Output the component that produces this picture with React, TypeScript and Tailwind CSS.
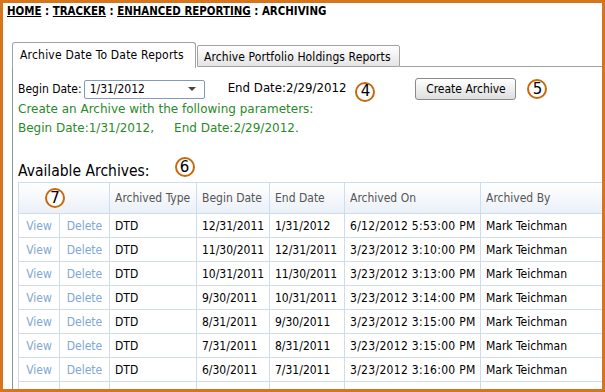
import React from "react";

const rows = [
  ["12/31/2011", "1/31/2012", "6/12/2012 5:53:00 PM"],
  ["11/30/2011", "12/31/2011", "3/23/2012 3:10:00 PM"],
  ["10/31/2011", "11/30/2011", "3/23/2012 3:13:00 PM"],
  ["9/30/2011", "10/31/2011", "3/23/2012 3:14:00 PM"],
  ["8/31/2011", "9/30/2011", "3/23/2012 3:15:00 PM"],
  ["7/31/2011", "8/31/2011", "3/23/2012 3:15:00 PM"],
  ["6/30/2011", "7/31/2011", "3/23/2012 3:16:00 PM"],
];

function Marker({ n }: { n: number }) {
  return (
    <span className="inline-flex w-[20px] h-[20px] items-center justify-center rounded-full border-2 border-[#c8690f] bg-white text-[15px] leading-none text-black font-['DejaVu_Sans',sans-serif]">
      {n}
    </span>
  );
}

const cell = "border border-[#cfdcee] pl-[5px]";

export default function App() {
  return (
    <div className="w-[605px] h-[392px] overflow-hidden border-[3px] border-[#d5761f] bg-white text-[12px] text-black font-['DejaVu_Sans_Condensed','Liberation_Sans',sans-serif]">
      {/* breadcrumb */}
      <div className="pl-[4px] pt-[1px] h-[14px] leading-[14px] text-[11.4px] font-bold">
        <span className="underline">HOME</span> : <span className="underline">TRACKER</span> :{" "}
        <span className="underline">ENHANCED REPORTING</span> : ARCHIVING
      </div>

      <div className="ml-[9px] mt-[25px]">
        {/* tabs */}
        <div className="flex items-end h-[25px]">
          <div className="relative z-10 -mb-px h-[26px] w-[184px] rounded-t-[3px] border border-b-0 border-[#a3a3a3] bg-white pl-[7px] pt-[5px] leading-[14px] tracking-[0.2px]">
            Archive Date To Date Reports
          </div>
          <div className="ml-[1px] h-[22px] w-[203px] rounded-t-[2px] border border-[#a3a3a3] bg-linear-to-b from-white to-[#e4e4e4] pl-[6px] pt-[4px] leading-[14px] tracking-[0.1px]">
            Archive Portfolio Holdings Reports
          </div>
          <div className="flex-1 border-b border-[#a3a3a3]" />
        </div>

        {/* panel */}
        <div className="h-[400px] border-l border-[#8f959b] pl-[5px] pt-[12px]">
          <div className="flex items-center h-[20px]">
            <span>Begin Date:</span>
            <div className="ml-[2px] flex h-[19px] w-[121px] items-center justify-between rounded-[2px] border border-[#7f9db9] bg-white pl-[5px] pr-[8px]">
              <span>1/31/2012</span>
              <span className="h-0 w-0 border-x-[4px] border-t-[4px] border-x-transparent border-t-[#444]" />
            </div>
            <span className="ml-[23px] font-['DejaVu_Sans',sans-serif] text-[11.8px]">End Date:2/29/2012</span>
            <span className="ml-[9px] mt-[5px]">
              <Marker n={4} />
            </span>
            <button className="ml-[40px] h-[22px] w-[101px] rounded-[3px] border border-[#8a8a8a] bg-linear-to-b from-white to-[#dedede]">
              Create Archive
            </button>
            <span className="ml-[11px]">
              <Marker n={5} />
            </span>
          </div>
          <div className="mt-[1px] leading-[19px] text-[#2a8a2a] font-['DejaVu_Sans',sans-serif] text-[12px]">
            <div>Create an Archive with the following parameters:</div>
            <div>
              Begin Date:1/31/2012,<span className="ml-[20px]">End Date:2/29/2012.</span>
            </div>
          </div>

          <div className="mt-[18px] mb-[2px] flex items-end h-[24px]">
            <span className="text-[15.5px] leading-[18px]">Available Archives:</span>
            <span className="ml-[25px] mb-[3px]">
              <Marker n={6} />
            </span>
          </div>

          <table className="table-fixed border-collapse w-[640px]">
            <colgroup>
              <col className="w-[41px]" />
              <col className="w-[50px]" />
              <col className="w-[87px]" />
              <col className="w-[73px]" />
              <col className="w-[75px]" />
              <col className="w-[136px]" />
              <col />
            </colgroup>
            <thead>
              <tr className="h-[31px] bg-linear-to-b from-white to-[#eaf0f8] text-[#555]">
                <th colSpan={2} className="border border-[#cfdcee] pl-[26px] text-left font-normal">
                  <Marker n={7} />
                </th>
                <th className={cell + " text-left font-normal"}>Archived Type</th>
                <th className={cell + " text-left font-normal"}>Begin Date</th>
                <th className={cell + " text-left font-normal"}>End Date</th>
                <th className={cell + " text-left font-normal"}>Archived On</th>
                <th className={cell + " text-left font-normal"}>Archived By</th>
              </tr>
            </thead>
            <tbody>
              {rows.map((r, i) => (
                <tr key={i} className="h-[24px]">
                  <td className="border border-[#cfdcee] text-center text-[#7fa6d6]">View</td>
                  <td className="border border-[#cfdcee] text-center text-[#7fa6d6]">Delete</td>
                  <td className={cell}>DTD</td>
                  <td className={cell}>{r[0]}</td>
                  <td className={cell}>{r[1]}</td>
                  <td className={cell + " tracking-[0.3px]"}>{r[2]}</td>
                  <td className={cell}>Mark Teichman</td>
                </tr>
              ))}
              <tr className="h-[24px]">
                <td className="border border-[#cfdcee]" />
                <td className="border border-[#cfdcee]" />
                <td className={cell} />
                <td className={cell} />
                <td className={cell} />
                <td className={cell} />
                <td className={cell} />
              </tr>
            </tbody>
          </table>
        </div>
      </div>
    </div>
  );
}
